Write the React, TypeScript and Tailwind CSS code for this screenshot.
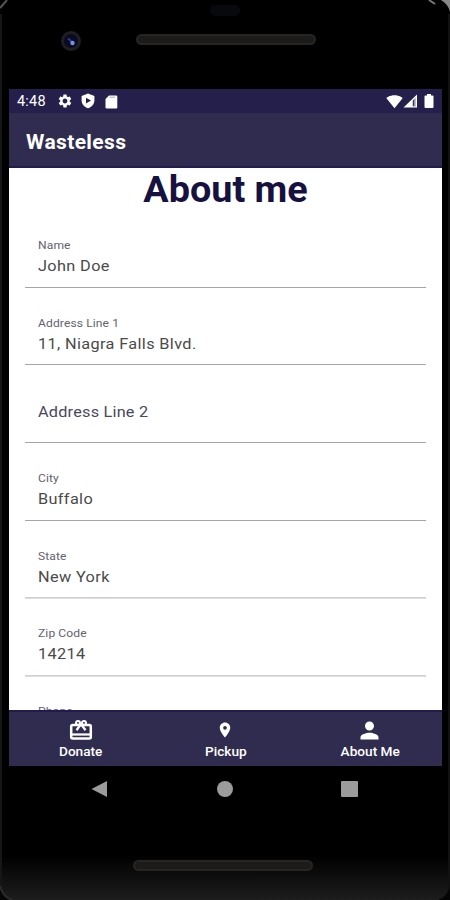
import type { ReactNode } from "react";
import clsx from "clsx";
import { MdLocationOn, MdPerson, MdSettings, MdSignalWifi4Bar } from "react-icons/md";

type Field = {
  label: string;
  value?: string;
  soft?: boolean;
};

const FIELDS: Field[] = [
  { label: "Name", value: "John Doe" },
  { label: "Address Line 1", value: "11, Niagra Falls Blvd." },
  { label: "Address Line 2" },
  { label: "City", value: "Buffalo" },
  { label: "State", value: "New York", soft: true },
  { label: "Zip Code", value: "14214", soft: true },
  { label: "Phone", value: "" },
];

function ShieldIcon() {
  return (
    <svg width="14" height="16" viewBox="0 0 14 16" className="shrink-0">
      <path d="M7 .5 13.400 3v4.500c0 3.600-2.800 6.500-6.400 7.800C3.400 14 .6 11.100.6 7.500V3z" fill="#fff" />
      <path d="M5 4.700v5.800L10 7.600z" fill="#24204b" />
    </svg>
  );
}

function SdCardIcon() {
  return (
    <svg width="13" height="14" viewBox="0 0 13 14" className="shrink-0">
      <path d="M4 .5h7a1.300 1.300 0 0 1 1.300 1.300v10.400a1.300 1.300 0 0 1-1.300 1.300H1.800A1.300 1.300 0 0 1 .5 12.200V4z" fill="#fff" />
      <path d="M4.500 2.200h5.500" stroke="#a9a7ba" strokeWidth="1" />
    </svg>
  );
}

function SignalIcon() {
  return (
    <svg width="15" height="14" viewBox="0 0 15 14" className="shrink-0">
      <path d="M.5 13.500 14 .5v13z" fill="#fff" />
      <path d="M9.500 6.500 12.700 3.500v9H9.500z" fill="#9c9aac" />
      <path d="M10.500 6v6" stroke="#3b3860" strokeWidth="1" />
    </svg>
  );
}

function BatteryIcon() {
  return (
    <svg width="10" height="14" viewBox="0 0 10 14" className="shrink-0">
      <path d="M3 0h4v1.500h1.500a1 1 0 0 1 1 1V13a1 1 0 0 1-1 1h-7a1 1 0 0 1-1-1V2.500a1 1 0 0 1 1-1H3z" fill="#fff" />
    </svg>
  );
}

function GiftIcon() {
  return (
    <svg width="24" height="22" viewBox="0 0 24 22" fill="none" stroke="#fff" className="shrink-0">
      <rect x="2.200" y="6" width="19.600" height="13.600" rx="1.500" strokeWidth="2.500" />
      <path d="M2.500 15.500h19" strokeWidth="2.200" />
      <circle cx="9" cy="3.900" r="2" strokeWidth="2" />
      <circle cx="15" cy="3.900" r="2" strokeWidth="2" />
      <path d="M12 5 7.500 11.200M12 5l4.500 6.200" strokeWidth="2.300" />
    </svg>
  );
}

function StatusBar() {
  return (
    <div className="flex h-6 shrink-0 items-center bg-[#24204b] text-white">
      <span className="ml-2 w-[30px] pt-px text-[14.5px] leading-6 tracking-[0.2px]">4:48</span>
      <MdSettings size={16} className="ml-[10px] shrink-0" />
      <span className="ml-[8px] flex"><ShieldIcon /></span>
      <span className="ml-[10px] mt-px flex"><SdCardIcon /></span>
      <MdSignalWifi4Bar size={17} className="ml-auto shrink-0" />
      <SignalIcon />
      <span className="ml-[6px] mr-[8px] flex"><BatteryIcon /></span>
    </div>
  );
}

function FormField({ label, value, soft }: Field) {
  return (
    <div
      className={clsx(
        "flex h-[77.6px] shrink-0 flex-col items-start border-b px-[12.5px]",
        soft ? "border-[#cfcfcf] shadow-[0_1px_0_#dedede]" : "border-[#a6a6a6]"
      )}
    >
      {value === undefined ? (
        <span className="mt-[35px] origin-left scale-x-105 text-[15.5px] leading-6 tracking-[0.2px] text-[#4b4760]">{label}</span>
      ) : (
        <>
          <span className="mt-[27px] origin-left scale-x-105 text-[11.5px] leading-4 tracking-[0.1px] text-[#65616f]">{label}</span>
          <span className="mt-[1px] origin-left scale-x-105 text-[15.5px] leading-6 tracking-[0.35px] text-[#4a4a4a]">{value}</span>
        </>
      )}
    </div>
  );
}

function Tab({ label, icon }: { label: string; icon: ReactNode }) {
  return (
    <div className="flex flex-1 flex-col items-center text-white">
      <span className="mt-[6px] flex h-6 items-center">{icon}</span>
      <span className="mt-[2px] scale-x-105 text-[13px] font-medium leading-4">{label}</span>
    </div>
  );
}

function Speaker({ className }: { className?: string }) {
  return (
    <div
      className={clsx(
        "h-[11px] w-[180px] shrink-0 rounded-full border-2 border-[#262523] bg-[#1c1b19]",
        className
      )}
    />
  );
}

// rounded shell edges and the sensor slot, drawn over the bezel
function ShellEdges() {
  return (
    <svg width="450" height="900" viewBox="0 0 450 900" className="pointer-events-none absolute inset-0">
      <rect x="210" y="5" width="30" height="11" rx="5" fill="#07090c" />
      <path d="M1 14v872" stroke="#161616" strokeWidth="2" />
      <path d="M449 14v872" stroke="#111" strokeWidth="2" />
      <path d="M0 8 7 0" stroke="#555" strokeWidth="2" />
      <path d="M441 0h9v12c-1-5-4-9-9-12z" fill="#888" />
      <path d="M429 0 435 4" stroke="#777" strokeWidth="2" />
      <path d="M0 886c2 7 6 12 12 14H0z" fill="#050505" />
      <path d="M0 886c2 7 6 12 12 14" fill="none" stroke="#2a2a2a" strokeWidth="2" />
      <path d="M450 886c-2 7-6 12-12 14h12z" fill="#050505" />
    </svg>
  );
}

export default function App() {
  return (
    <div className="relative flex h-[900px] w-[450px] flex-col overflow-hidden bg-[linear-gradient(#000_0,#000_855px,#1d1d1d_900px)] font-[Roboto,sans-serif]">
      <ShellEdges />
      <div className="flex h-[89px] shrink-0 items-start">
        <div className="ml-[61px] mt-[31px] flex size-5 items-center justify-center rounded-full border-[3px] border-[#1f1e20] bg-[#0b0b20]">
          <svg width="12" height="12" viewBox="0 0 12 12">
            <path d="M3 3.500 7 7" stroke="#27389c" strokeWidth="2" />
            <circle cx="7.500" cy="8" r="2.200" fill="#7392e9" />
          </svg>
        </div>
        <Speaker className="ml-[55px] mt-[34px]" />
      </div>

      <div className="ml-[9px] flex h-[677px] w-[433px] shrink-0 flex-col bg-white">
        <StatusBar />
        <header className="flex h-[55px] shrink-0 items-center border-b-2 border-[#211c50] bg-[#302c50] px-[17px]">
          <h1 className="mt-[4px] origin-left scale-x-105 text-[20px] font-bold leading-6 tracking-[0.35px] text-white">Wasteless</h1>
        </header>
        <main className="flex h-[542px] shrink-0 flex-col overflow-hidden px-4">
          <h2 className="h-[42.3px] shrink-0 scale-x-105 text-center text-[36px] font-bold leading-[44px] text-[#17113f]">About me</h2>
          {FIELDS.map((field) => (
            <FormField key={field.label} {...field} />
          ))}
        </main>
        <nav className="flex h-[56px] shrink-0 border-t-2 border-[#211c50] bg-[#302c50]">
          <Tab label="Donate" icon={<GiftIcon />} />
          <Tab label="Pickup" icon={<MdLocationOn size={18} />} />
          <Tab label="About Me" icon={<MdPerson size={27} />} />
        </nav>
      </div>

      <div className="flex h-[46px] shrink-0 items-center pl-[91px]">
        <svg width="17" height="18" viewBox="0 0 17 18">
          <path d="M.5 9 16 1v16z" fill="#9b9b9b" />
        </svg>
        <div className="ml-[109px] size-4 rounded-full bg-[#9b9b9b]" />
        <div className="ml-[108px] h-4 w-[17px] rounded-[1px] bg-[#9b9b9b]" />
      </div>
      <Speaker className="ml-[133px] mt-[48px]" />
    </div>
  );
}
